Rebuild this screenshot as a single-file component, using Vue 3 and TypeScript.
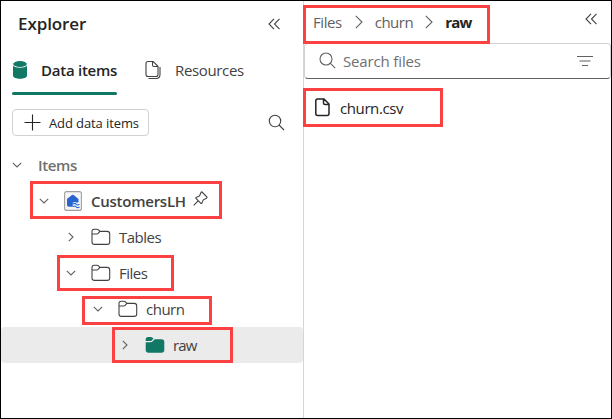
<script setup lang="ts">
interface TreeRow {
  id: string
  label: string
  indent: number
  open: boolean
  icon: 'none' | 'lakehouse' | 'folder' | 'folder-filled'
}

const rows: TreeRow[] = [
  { id: 'items', label: 'Items', indent: 10, open: true, icon: 'none' },
  { id: 'lakehouse', label: 'CustomersLH', indent: 37, open: true, icon: 'lakehouse' },
  { id: 'tables', label: 'Tables', indent: 64, open: false, icon: 'folder' },
  { id: 'files', label: 'Files', indent: 64, open: true, icon: 'folder' },
  { id: 'churn', label: 'churn', indent: 91, open: true, icon: 'folder' },
  { id: 'raw', label: 'raw', indent: 118, open: false, icon: 'folder-filled' },
]
const marked = ['lakehouse', 'files', 'churn', 'raw']
</script>

<template>
  <div class="window">
    <aside class="explorer">
      <header class="head">
        <h1>Explorer</h1>
        <svg class="collapse" width="13" height="12" viewBox="0 0 13 12"><path d="M6 .8 1 6l5 5.200M11.500.8l-5 5.200 5 5.200" /></svg>
      </header>

      <nav class="tabs">
        <div class="tab active">
          <svg width="16" height="20" viewBox="0 0 16 20">
            <path class="green" d="M1 5.500c2 3 12 3 14 0v10c0 4.300-14 4.300-14 0z" />
            <ellipse class="green" cx="8" cy="4" rx="6.800" ry="3" />
          </svg>
          <span class="t-data">Data items</span>
        </div>
        <div class="tab">
          <svg width="17" height="20" viewBox="0 0 17 20">
            <path d="M3 1.500h5.200L13 6.300v8.200q0 2-2 2H3q-2 0-2-2v-11q0-2 2-2zM7.500 1.500V5q0 1.500 1.500 1.500h4M3.500 18.500H11q4 0 4-4V7" />
          </svg>
          <span class="t-res">Resources</span>
        </div>
      </nav>

      <div class="actions">
        <button class="add">
          <svg width="17" height="17" viewBox="0 0 17 17"><path d="M8.500.5v16M.5 8.500h16" /></svg>
          <span>Add data items</span>
        </button>
        <svg class="find" width="17" height="17" viewBox="0 0 17 17"><circle cx="7" cy="7" r="5.700" /><path d="m11 11 5 5" /></svg>
      </div>

      <div class="tree">
        <div v-for="row in rows" :key="row.id" class="row" :class="row.id" :style="{ paddingLeft: row.indent + 'px' }">
          <span class="chev">
            <svg v-if="row.open" width="10" height="6" viewBox="0 0 10 6"><path d="m.8.800 4.200 4.200L9.200.8" /></svg>
            <svg v-else width="6" height="10" viewBox="0 0 6 10"><path d="M.8.800 5 5 .8 9.200" /></svg>
          </span>
          <svg v-if="row.icon === 'lakehouse'" class="house" width="18" height="20" viewBox="0 0 18 20">
            <rect class="card" x=".6" y=".6" width="16.800" height="18.800" rx="2" />
            <path class="blue" d="M3 8.500Q3 8 3.500 7.500L8 4q.8-.7 1.600 0L14.500 8v3.300q-1.500.8-2.700 0-1.600-.8-3 .5v4H5Q3 15.800 3 14z" />
            <path class="wave" d="M9.200 13.200q1.500-1.600 3 0t3.300 0M9.200 15.800q1.500-1.600 3 0t3.300 0" />
          </svg>
          <svg v-else-if="row.icon === 'folder'" class="folder" width="20" height="18" viewBox="0 0 20 18">
            <path d="M1 6V3.500Q1 1.200 3.200 1.200h2.600q1 0 1.700.7l1.400 1.500h7.300q2.500 0 2.500 2.500v8q0 2.500-2.500 2.500H3.500Q1 16.400 1 14zM1 6h4.700q.8 0 1.400-.6l1.800-2" />
          </svg>
          <svg v-else-if="row.icon === 'folder-filled'" class="folder" width="20" height="18" viewBox="0 0 20 18">
            <path class="green" d="M.7 5V3.500Q.7 1 3.200 1h2.600q1 0 1.700.7l1 .9-1.800 1.900q-.5.500-1.200.5zM.7 6.300h5q1 0 1.800-.8L9.700 3.200h6.800q2.800 0 2.800 2.800v8q0 2.800-2.800 2.800h-13Q.7 16.800.7 14z" />
          </svg>
          <span class="label">{{ row.label }}</span>
          <svg v-if="row.icon === 'lakehouse'" class="pin" width="15" height="15" viewBox="0 0 15 15">
            <path d="m9 1 5 5q.3.800-.5 1.200l-3.200 1.600-1.500 3.500q-.4.500-.9 0L3 7.300q-.5-.5.100-.9l3.400-1.500L8 1.500Q8.400.6 9 1zM5.100 9.800.7 14.300" />
          </svg>
          <i v-if="marked.includes(row.id)" class="mark" />
        </div>
      </div>
    </aside>

    <main class="files-pane">
      <header class="crumbs">
        <span class="c1">Files</span>
        <svg width="8" height="14" viewBox="0 0 8 14"><path d="m.8.800 6.200 6.200-6.200 6.200" /></svg>
        <span class="c2">churn</span>
        <svg width="8" height="14" viewBox="0 0 8 14"><path d="m.8.800 6.200 6.200-6.200 6.200" /></svg>
        <b class="c3">raw</b>
        <svg class="collapse" width="13" height="12" viewBox="0 0 13 12"><path d="M6 .8 1 6l5 5.200M11.500.8l-5 5.200 5 5.200" /></svg>
        <i class="mark" />
      </header>
      <div class="search">
        <svg width="17" height="17" viewBox="0 0 17 17"><circle cx="7" cy="7" r="6" /><path d="m11.200 11.200 5 5" /></svg>
        <span>Search files</span>
        <svg class="filter" width="16" height="12" viewBox="0 0 16 12"><path d="M0 1.500h16M2.500 6h11M5 10.500h6" /></svg>
      </div>
      <div class="file">
        <svg width="15" height="19" viewBox="0 0 15 19">
          <path d="M2.500 1H9l5 5v9.500q0 2-2 2H2.500q-1.700 0-1.700-2V3q0-2 1.700-2zM8.500 1v4q0 1.500 1.500 1.500h4" />
        </svg>
        <span>churn.csv</span>
        <i class="mark" />
      </div>
    </main>
  </div>
</template>

<style>
body { margin: 0; background: #fff; }
</style>

<style scoped>
.window {
  box-sizing: border-box;
  width: 612px;
  height: 419px;
  border: 1px solid #000;
  display: flex;
  overflow: hidden;
  background: #fff;
  color: #424242;
  font: 15px/20px "Open Sans", "Noto Sans", sans-serif;
}
svg { display: block; flex: none; fill: none; stroke: #424242; stroke-width: 1.100; }
span, b, h1 { white-space: nowrap; }
.green { fill: #117865; stroke: none; }
.explorer { width: 302px; flex: none; border-right: 1px solid #d6d6d6; }
.head { height: 46px; box-sizing: border-box; display: flex; align-items: center; justify-content: space-between; padding: 0 22px 0 17px; }
h1 { margin: 0; font-size: 17px; line-height: 22px; font-weight: 600; letter-spacing: -.1px; color: #242424; }
.tabs { height: 48px; display: flex; gap: 28px; padding-left: 11px; }
.tab { height: 48px; box-sizing: border-box; display: flex; align-items: center; gap: 13px; padding-bottom: 2px; }
.t-data { letter-spacing: -.25px; }
.t-res { letter-spacing: -.35px; }
.active { width: 105px; position: relative; color: #242424; font-weight: 600; }
.active::after { content: ""; position: absolute; left: 0; right: 0; bottom: 0; height: 3px; border-radius: 2px; background: #117865; }
.actions { display: flex; align-items: center; justify-content: space-between; margin-top: 14px; padding: 0 18px 0 11px; }
.add { box-sizing: border-box; width: 137px; height: 27px; padding: 0 0 0 11px; display: flex; align-items: center; gap: 8px; border: 1px solid #d1d1d1; border-radius: 4px; background: #fff; color: #242424; font: 13px/18px "Open Sans", sans-serif; letter-spacing: -.1px; }
.add svg { stroke: #242424; }
.tree { margin-top: 11px; }
.row { position: relative; box-sizing: border-box; height: 36px; display: flex; align-items: center; }
.row .label { letter-spacing: -.5px; }
.chev { width: 12px; display: flex; justify-content: center; }
.chev svg { stroke: #616161; }
.items .label { margin-left: 15px; font-weight: 600; letter-spacing: -.35px; color: #707070; }
.lakehouse .label { margin-left: 9px; font-weight: 600; letter-spacing: -.25px; }
.house { margin-left: 14px; }
.card { fill: #f5f5f5; stroke: #a0a0a0; }
.blue { fill: #2764cf; stroke: none; }
.wave { stroke: #2764cf; }
.pin { margin: -6px 0 0 7px; }
.folder { margin-left: 14px; }
.folder + .label { margin-left: 8px; }
.raw { background: #ebebeb; border-radius: 4px; }
.raw .label { letter-spacing: -.8px; }
.mark { position: absolute; box-sizing: border-box; border: 3px solid #fb4141; }
.lakehouse .mark { left: 29px; top: -2px; width: 192px; height: 38px; }
.files .mark { left: 56px; top: 0; width: 117px; height: 36px; }
.churn .mark { left: 81px; top: 5px; width: 130px; height: 29px; }
.raw .mark { left: 111px; top: 0; width: 121px; height: 36px; }
.files-pane { flex: 1; min-width: 0; }
.crumbs { position: relative; height: 42px; box-sizing: border-box; display: flex; align-items: center; padding: 0 13px 1px 9px; color: #616161; }
.c1, .c2 { letter-spacing: -.45px; }
.crumbs > svg { margin: 0 12px 0 13px; stroke: #616161; }
.c2 + svg { margin-left: 12px; }
.crumbs .c3 { color: #242424; font-weight: 700; letter-spacing: -.9px; }
.crumbs .collapse { margin: -5px 0 0 auto; stroke: #424242; }
.crumbs .mark { left: -1px; top: 4px; width: 187px; height: 39px; }
.search { box-sizing: border-box; height: 36px; display: flex; align-items: center; padding: 0 17px 1px 14px; border: 1px solid #d1d1d1; border-bottom-color: #616161; border-radius: 4px; color: #707070; }
.search span { margin-left: 7px; letter-spacing: -.15px; }
.search svg { stroke: #616161; }
.search .filter { margin-left: auto; }
.file { position: relative; height: 39px; margin-top: 9px; display: flex; align-items: center; gap: 10px; padding-left: 11px; color: #242424; }
.file span { letter-spacing: -.4px; }
.file svg { stroke: #242424; stroke-width: 1.500; }
.file .mark { left: -1px; top: 0; width: 140px; height: 39px; }
</style>
